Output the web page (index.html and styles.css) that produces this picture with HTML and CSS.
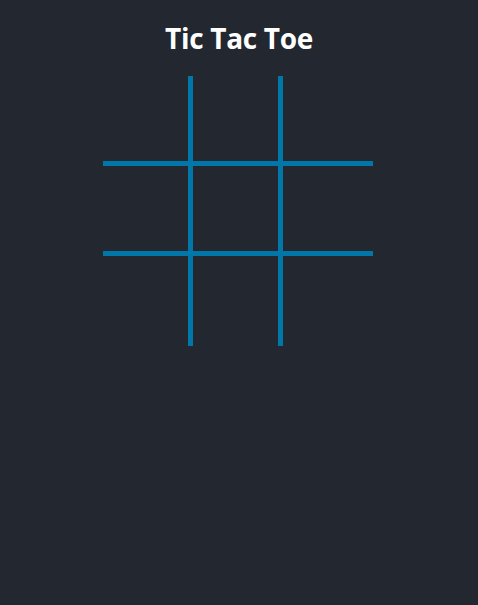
FILE: index.html
```html
<!DOCTYPE html>
<html lang="en">
<head>
<meta charset="utf-8">
<title>Tic Tac Toe</title>
<link rel="stylesheet" href="styles.css">
</head>
<body>
<main class="page">
  <h1 class="title">Tic Tac Toe</h1>
  <div class="board">
    <div class="cell r c"></div>
    <div class="cell r c"></div>
    <div class="cell c"></div>
    <div class="cell r c"></div>
    <div class="cell r c"></div>
    <div class="cell c"></div>
    <div class="cell r"></div>
    <div class="cell r"></div>
    <div class="cell"></div>
  </div>
</main>
</body>
</html>
```
FILE: styles.css
```css
html, body {
  margin: 0;
  padding: 0;
  background: #23272f;
  height: 100%;
}
.page {
  display: flex;
  flex-direction: column;
  align-items: center;
  padding-top: 19px;
  font-family: "Open Sans", "Noto Sans", sans-serif;
}
.title {
  margin: 0;
  color: #ffffff;
  font-size: 28px;
  line-height: 38px;
  font-weight: 700;
  letter-spacing: -0.3px;
}
.board {
  margin-top: 19px;
  margin-right: 2px;
  display: grid;
  grid-template-columns: repeat(3, 90px);
  grid-template-rows: repeat(3, 90px);
}
.cell {
  box-sizing: border-box;
}
.cell.r {
  border-right: 5px solid #0077a8;
}
.cell.c {
  border-bottom: 5px solid #0077a8;
}
```
